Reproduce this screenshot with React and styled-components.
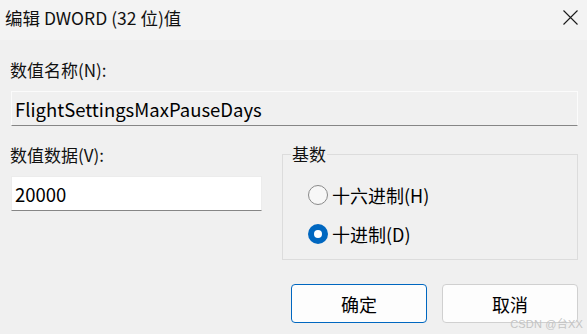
import React from "react";
import styled, { createGlobalStyle } from "styled-components";

const Global = createGlobalStyle`
  html, body { margin: 0; padding: 0; background: #f0f0f0; }
  * { box-sizing: border-box; }
`;

const FONT = `"Noto Sans CJK SC", "Noto Sans", sans-serif`;

const Dialog = styled.div`
  position: relative;
  width: 587px;
  height: 334px;
  background: #f0f0f0;
  font-family: ${FONT};
  color: #1a1a1a;
  overflow: hidden;
`;

const TitleBar = styled.div`
  height: 40px;
  background: #f3f3f3;
  display: flex;
  align-items: center;
  justify-content: space-between;
  padding: 0 9px 0 5px;
`;

const Title = styled.div`
  font-size: 17.5px;
  line-height: 24px;
  margin-top: -5px;
  color: #111;
`;

const CloseBtn = styled.div`
  width: 15px;
  height: 15px;
  margin-top: -5px;
  display: flex;
`;

const Body = styled.div`
  padding: 18px 9px 0 11px;
`;

const Label = styled.div`
  font-size: 17px;
  line-height: 24px;
  margin-left: -1px;
  color: #111;
`;

const Field = styled.div`
  height: 35px;
  margin-top: ${(p) => p.$mt}px;
  width: ${(p) => p.$w};
  background: ${(p) => (p.$readonly ? "#f0f0f0" : "#ffffff")};
  border: 1px solid ${(p) => (p.$readonly ? "#fbfbfb" : "#ececec")};
  border-bottom: 1px solid #868686;
  display: flex;
  align-items: center;
  padding: 0 0 0 3px;
  font-size: 18.5px;
  color: #000;
`;

const Row = styled.div`
  display: grid;
  grid-template-columns: 251px 1fr;
  align-items: start;
  column-gap: 20px;
  margin-top: ${(p) => p.$mt}px;
`;

const Column = styled.div`
  display: flex;
  flex-direction: column;
`;

const Group = styled.fieldset`
  margin: 0;
  margin-top: 1px;
  border: 1px solid #dcdcdc;
  border-radius: 0;
  padding: 21px 0 0 25px;
  height: 116px;
  min-width: 0;
`;

const Legend = styled.legend`
  font-size: 17px;
  line-height: 20px;
  padding: 0 1px;
  margin-left: -17px;
  color: #111;
`;

const RadioRow = styled.div`
  display: flex;
  align-items: center;
  gap: 4px;
  height: 20px;
  margin-bottom: 19px;
  font-size: 18px;
  color: #000;
`;

const RadioCircle = styled.span`
  width: 20px;
  height: 20px;
  border-radius: 50%;
  flex: none;
  border: ${(p) => (p.$checked ? "none" : "1px solid #8a8a8a")};
  background: ${(p) => (p.$checked ? "#0067c0" : "#f7f7f7")};
  display: flex;
  align-items: center;
  justify-content: center;
  &::after {
    content: "";
    display: ${(p) => (p.$checked ? "block" : "none")};
    width: 8px;
    height: 8px;
    border-radius: 50%;
    background: #fff;
  }
`;

const Buttons = styled.div`
  display: flex;
  justify-content: flex-end;
  gap: 15px;
  margin-top: 24px;
`;

const Button = styled.div`
  width: 136px;
  height: 39px;
  border-radius: 4px;
  background: #fdfdfd;
  border: ${(p) => (p.$primary ? "1.5px solid #0067c0" : "1px solid #d0d0d0")};
  display: flex;
  align-items: center;
  justify-content: center;
  font-size: 18px;
  color: #000;
`;

const Watermark = styled.div`
  position: absolute;
  right: 4px;
  bottom: 3px;
  font-family: "Liberation Sans", "Noto Sans CJK SC", sans-serif;
  font-size: 11px;
  color: #c4c4c4;
  letter-spacing: 0.2px;
`;

export default function App() {
  return (
    <Dialog>
      <Global />
      <TitleBar>
        <Title>编辑 DWORD (32 位)值</Title>
        <CloseBtn>
          <svg width="15" height="15" viewBox="0 0 15 15">
            <path d="M0.5 0.5 L14.5 14.5 M14.5 0.5 L0.5 14.5" stroke="#1a1a1a" strokeWidth="1.1" fill="none" />
          </svg>
        </CloseBtn>
      </TitleBar>
      <Body>
        <Label>数值名称(N):</Label>
        <Field $readonly $mt={9} $w="567px">FlightSettingsMaxPauseDays</Field>
        <Row $mt={17}>
          <Column>
            <Label>数值数据(V):</Label>
            <Field $mt={9} $w="251px">20000</Field>
          </Column>
          <Group>
            <Legend>基数</Legend>
            <RadioRow>
              <RadioCircle />
              十六进制(H)
            </RadioRow>
            <RadioRow>
              <RadioCircle $checked />
              十进制(D)
            </RadioRow>
          </Group>
        </Row>
        <Buttons>
          <Button $primary>确定</Button>
          <Button>取消</Button>
        </Buttons>
      </Body>
      <Watermark>CSDN @台XX</Watermark>
    </Dialog>
  );
}
